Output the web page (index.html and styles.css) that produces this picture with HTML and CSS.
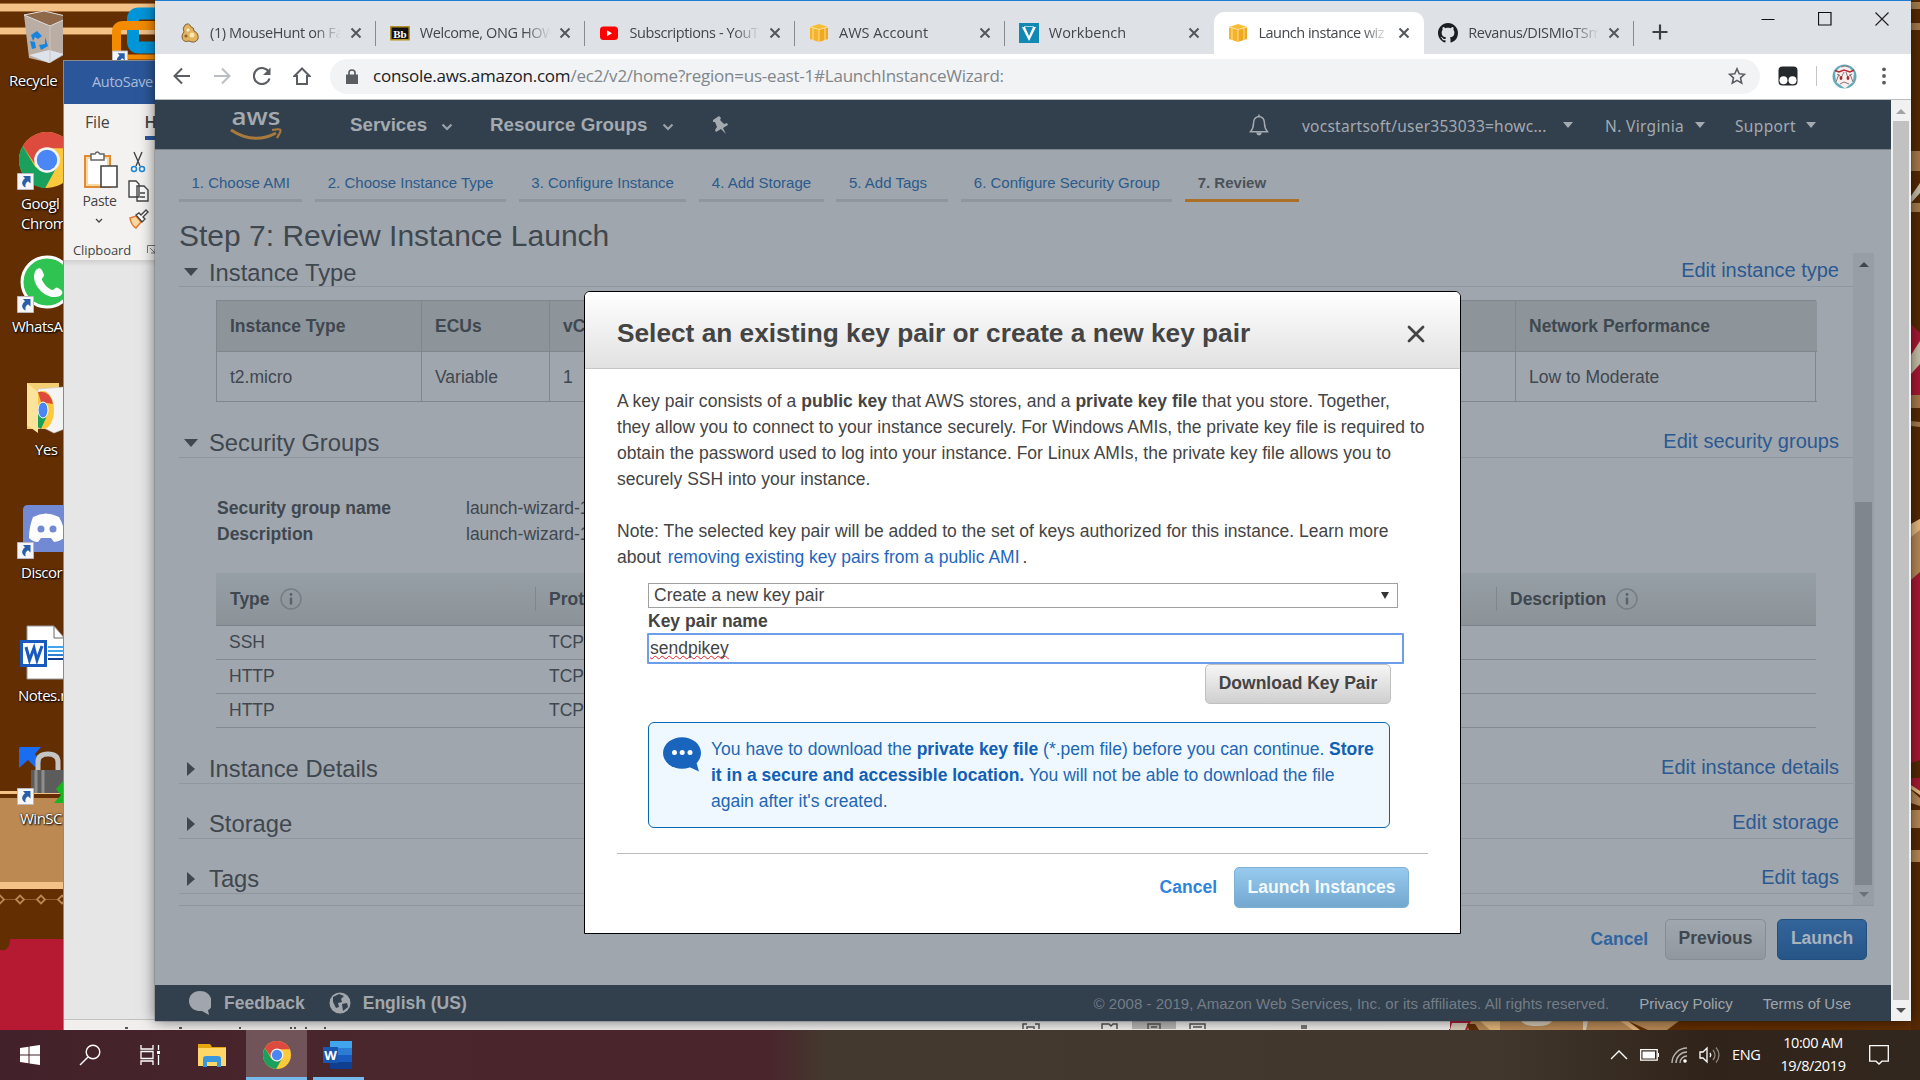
FILE: index.html
```html
<!DOCTYPE html>
<html lang="en">
<head>
<meta charset="utf-8">
<title>Launch instance wizard</title>
<link rel="stylesheet" href="styles.css">
</head>
<body>
<svg width="0" height="0" class="defs">
  <defs>
    <symbol id="chrome" viewBox="0 0 48 48">
      <circle cx="24" cy="24" r="24" fill="#fdc93c"/>
      <path d="M3.2 12A24 24 0 0 1 44.8 12L45.8 14H24L14 28z" fill="#dd4b3e"/>
      <path d="M3.2 12A24 24 0 0 0 22.5 48L33 29 24 35 14 30z" fill="#19a05c"/>
      <circle cx="24" cy="24" r="11" fill="#f4f4f4"/>
      <circle cx="24" cy="24" r="8.8" fill="#4a86f5"/>
    </symbol>
    <symbol id="shortcut" viewBox="0 0 17 17">
      <path d="M.5.5h16v16H.5z" fill="#f6f6f8" stroke="#b9b9bd"/>
      <path d="M6 3h7.500v7.500L11 8.200C8.600 9.800 8 11.500 8.600 14.500 4.500 12.500 3.800 8.800 8 5.300z" fill="#2a5ea8"/>
    </symbol>
    <symbol id="cube" viewBox="0 0 20 20">
      <path d="M1 4 10 6v13l-9-3z" fill="#f4b32b"/><path d="M19 4 10 6v13l9-3z" fill="#f0a91f"/>
      <path d="M1 4 10 1l9 3-9 2.500z" fill="#f7bd35"/>
      <path d="M1 4 10 6.500 19 4M10 6.500V19M4 5v12M16 5v12" stroke="#fde3a5" stroke-width=".9" fill="none"/>
    </symbol>
    <symbol id="close" viewBox="0 0 12 12"><path d="M1.500 1.500l9 9M10.500 1.500l-9 9" stroke="#54585c" stroke-width="2" fill="none"/></symbol>
    <symbol id="info" viewBox="0 0 22 22"><circle cx="11" cy="11" r="10" fill="none" stroke="#757d85" stroke-width="1.500"/><path d="M11 9.500v7" stroke="#596169" stroke-width="2.400"/><circle cx="11" cy="6.500" r="1.400" fill="#596169"/></symbol>
    <symbol id="chev" viewBox="0 0 12 8"><path d="M1.500 1.500 6 6l4.500-4.500" stroke="#9aa1a8" stroke-width="2.200" fill="none"/></symbol>
  </defs>
</svg>

<div class="desktop">
  <svg class="wallpaper" viewBox="0 0 1920 1080">
    <path fill="#632e02" d="M0 0h1920v1080H0z"/>
    <path fill="#f2c286" d="M0 4h160v7H0zM0 28h160v6H0zM0 882h80v7H0zM0 791h80v3H0z"/>
    <path fill="#a8703a" d="M0 3h160v1H0zM0 11h160v1H0zM0 27h160v1H0zM0 34h160v1H0z"/>
    <path fill="#bc8953" d="M0 798h80v84H0z"/>
    <path d="M0 899.500h64" stroke="#8f5a2c"/>
    <path d="M-4 899.500l4-4 4 4-4 4zM16 899.500l4-4 4 4-4 4zM37 899.500l4-4 4 4-4 4zM58 899.500l4-4 4 4-4 4z" fill="#632e02" stroke="#b98652" stroke-width="1.800"/>
    <path fill="#b61a33" d="M0 950Q10 952 10 939H80v91H0z"/>
    <path fill="#562a03" d="M1911 0h9v1030h-9z"/>
    <path fill="#a87c4c" d="M1911 2h9v7h-9zM1911 23h9v7h-9zM1911 151h9v20h-9zM1911 203h9v9h-9zM1911 395h9v13h-9zM1911 421l9 1v5l-9-1z"/>
    <path fill="#c8c0a8" d="M1911 196l9-13v10l-9 10z"/>
    <path fill="#a81834" d="M1911 324l9 9v62h-9zM1911 580l9-8v188l-9 3zM1911 778h9v18l-9-12z"/>
    <path fill="#c8c0a8" d="M1911 355l9-14v23l-9 10z"/>
    <path fill="#b98a56" d="M1911 524l9-5v53l-9 8zM1911 790l9 8v8l-9-3zM1911 810h9v18h-9zM1911 850h9v12h-9z"/>
    <path fill="#e6bb80" d="M1911 524l9-5v11l-9 7zM1911 785l9 6v4l-9-6z"/>
    <path fill="#b98a56" d="M1449 1021h230l-12 9h-218z"/>
    <path fill="#b01a38" d="M1449 1021h22l-4 9h-18z"/>
    <path fill="#d8cdbb" d="M1452 1023h16l-3 7h-15zM1521 1021h31q-2 5-15 5t-16-5zM1583 1021h5l-2 9h-3z"/>
    <path fill="#e2b77c" d="M1480 1021h20v9h-10zM1620 1021h8l14 9h-9z"/>
    <path fill="#632e02" d="M1467 1024l8 0 4 6h-10zM1628 1021l12 9h8z"/>
  </svg>

  <ul class="icons">
    <li><svg viewBox="0 0 64 60"><path d="M24 7 44 3 70 9 64 47 50 55 29 50z" fill="#b9ada4"/><path d="M24 7 44 3 70 9 50 18z" fill="#8e6a4b" stroke="#ddd" stroke-width="1"/><path d="M29 47l20-5 15 4-15 9z" fill="#dde3ea"/><path d="M50 18v37" stroke="#cbc5bf"/><path d="M31 27l6-4 5 5-4 3-3-2-2 4zM30 33l5 1 1 6-4 1zM39 37l6-1 0-7 3 9-7 4z" fill="#1685e0"/></svg><span class="lb recycle">Recycle</span></li>
    <li><svg viewBox="0 0 64 60"><use href="#chrome" x="19" y="1" width="56" height="56"/><use href="#shortcut" x="17" y="42" width="17" height="17"/></svg><span class="lb google">Googl<br>Chrom</span></li>
    <li><svg viewBox="0 0 64 60"><circle cx="47" cy="28" r="25" fill="#2fc351" stroke="#fff" stroke-width="3"/><path d="M36 16c4-4 6-1 8 5 0 3-3 3-2 5 3 6 6 8 10 10 3 0 3-4 6-2 6 3 5 6 2 8-14 6-32-14-24-26z" fill="#fff"/><use href="#shortcut" x="17" y="42" width="17" height="17"/></svg><span class="lb whats">WhatsA</span></li>
    <li><svg viewBox="0 0 64 60"><path d="M27 6h32v46H27z" fill="#f3cf71"/><path d="M38 12l26-2v42l-10 4-16-8z" fill="#f4f4f2" stroke="#c8c8c8" stroke-width=".6"/><ellipse cx="43" cy="33" rx="11" ry="19" fill="#fdc93c"/><path d="M38 15q12-2 15 12l-12-2z" fill="#dd4b3e"/><path d="M36 32l10 9-5 11-5-3z" fill="#19a05c"/><ellipse cx="43" cy="33" rx="5" ry="8" fill="#4a86f5" stroke="#fff"/><path d="M27 6l11 9v41l-11-8z" fill="#fbe39b"/></svg><span class="lb yes">Yes</span></li>
    <li><svg viewBox="0 0 64 60"><path d="M28 5h36v47H28q-5 0-5-5V10q0-5 5-5z" fill="#7289d4"/><path d="M33 17q13-7 26 0 6 10 5 21-5 4-10 4l-3-4H41l-3 4q-5 0-9-4 0-11 4-21z" fill="#fff"/><circle cx="41" cy="29" r="3.500" fill="#7289d4"/><circle cx="53" cy="29" r="3.500" fill="#7289d4"/><use href="#shortcut" x="17" y="42" width="17" height="17"/></svg><span class="lb discord">Discor</span></li>
    <li><svg viewBox="0 0 64 60"><path d="M27 3h27l12 14v39H27z" fill="#fff" stroke="#999"/><path d="M54 3v12h11" fill="none" stroke="#666"/><path d="M48 24h16M48 28h16" stroke="#41a5ee" stroke-width="2"/><path d="M48 32h16" stroke="#2b7cd3" stroke-width="2"/><path d="M48 36h16" stroke="#103f91" stroke-width="2"/><path d="M21.500 18.500h24v24h-24z" fill="#fff" stroke="#185abd" stroke-width="3"/><path d="M26 24l3.500 13 4.500-12 3 12 5-14" fill="none" stroke="#185abd" stroke-width="3"/></svg><span class="lb notes">Notes.r</span></li>
    <li><svg viewBox="0 0 64 60"><path d="M20 1h21l-6 7 6 8-6 5-7-7-9 8V4q0-3 1-3z" fill="#1a6cf0"/><path d="M38 26V16q0-8 10-8t10 8v10" fill="none" stroke="#c5c5c5" stroke-width="5"/><path d="M31 24h34v23H33q-2-2-2-4z" fill="#5c5c5c"/><path d="M36 24v23M43 24v23" stroke="#8d8d8d" stroke-width="3"/><path d="M64 34l-8 9 5 6-7 8h10z" fill="#16b521"/><use href="#shortcut" x="17" y="42" width="17" height="17"/></svg><span class="lb winscp">WinSC</span></li>
  </ul>
  <svg class="vm" viewBox="0 0 60 60"><path d="M60 13.500H41q-6 0-6 6v22q0 6 6 6h19" fill="none" stroke="#0095d9" stroke-width="12"/><path d="M60 25.500H25q-6.500 0-6.500 6.500v34" fill="none" stroke="#f38b00" stroke-width="9"/><path d="M22 57h38" stroke="#f38b00" stroke-width="5"/><use href="#shortcut" x="14" y="50" width="16" height="17"/></svg>

  <section class="word">
    <header class="word-title">AutoSave</header>
    <div class="word-tabs"><span>File</span><span class="home">H</span></div>
    <div class="ribbon">
      <div class="paste">
        <svg width="36" height="40" viewBox="0 0 36 40"><path d="M2 6h25v31H2z" fill="#fbd9a0" stroke="#e08a33" stroke-width="2"/><path d="M5 9h19v25H5z" fill="#fff"/><path d="M8 4h4q2-4 5 0h4v6H8z" fill="#fff" stroke="#666" stroke-width="1.500"/><path d="M18 16h16v21H18z" fill="#fff" stroke="#444" stroke-width="1.600"/></svg>
        <span>Paste</span>
        <svg width="8" height="6" viewBox="0 0 8 6"><path d="M1 1l3 3 3-3" stroke="#444" stroke-width="1.300" fill="none"/></svg>
      </div>
      <div class="clips">
        <svg width="16" height="22" viewBox="0 0 16 22"><path d="M4 1l6 14M12 1L6 15" stroke="#444" stroke-width="1.400"/><circle cx="4" cy="18" r="2.500" fill="none" stroke="#1e88d2" stroke-width="1.500"/><circle cx="12" cy="18" r="2.500" fill="none" stroke="#1e88d2" stroke-width="1.500"/></svg>
        <svg width="21" height="22" viewBox="0 0 21 22"><path d="M1 1h7l3 3v13H1zM9 6h7l4 4v11H9zM12 13h5M12 17h5" stroke="#444" stroke-width="1.400" fill="#f9f9f9"/></svg>
        <svg width="21" height="20" viewBox="0 0 21 20"><path d="M2 9l6-2 5 6-5 6q-5-3-6-10z" fill="#fbd9a0" stroke="#e8762c" stroke-width="1.500"/><path d="M8 6l3-2 2 2 5-5 2 2-5 5 2 2-3 3z" fill="#fff" stroke="#444" stroke-width="1.400"/></svg>
      </div>
    </div>
    <div class="group-name">Clipboard<svg width="9" height="9" viewBox="0 0 9 9"><path d="M.5 8V.5H8M3 3l5 5M8 4v4H4" stroke="#777" fill="none"/></svg></div>
    <div class="word-doc"></div>
    <svg class="word-status" viewBox="0 0 1386 9" width="1386" height="9"><path d="M0 0h1386v9H0z" fill="#f0efee"/><path d="M61 8h3M115 8h3M175 8h2M226 8h2M230 8h2M241 8h2M260 8h2" stroke="#555" stroke-width="2"/><path d="M1068 0h44v9h-44z" fill="#bab9b8"/><path d="M959 9V4h4M971 4h4v5M963 9V7h7v2M1038 9V4h7l2 2 2-2h4v5M1084 9V4h12v5M1087 7h6M1126 9V4h15v5M1129 7h9" fill="none" stroke="#555" stroke-width="1.500"/><path d="M1237 5h6v4h-6z" fill="#777"/></svg>
  </section>

  <section class="browser">
    <header class="tabs">
      <div class="tab"><svg viewBox="0 0 20 20"><path d="M5 2q4-3 6 2 3 0 3 4 5 2 4 8-3 5-9 2-6 2-7-4 0-3 2-5-2-4 1-7z" fill="#e3b45f" stroke="#806035"/><circle cx="8" cy="7" r="1.600" fill="#fff3cf"/><circle cx="12" cy="12" r="2.500" fill="#fbe7ae"/><circle cx="6" cy="13" r="1.600" fill="#8b6430"/></svg><span class="t">(1) MouseHunt on Fa</span><svg class="x"><use href="#close"/></svg></div>
      <div class="tab"><svg viewBox="0 0 20 20"><path d="M.8 3.800h18.400v13H.8z" fill="#111" stroke="#b59225" stroke-width="1.500"/><text x="10" y="14.500" text-anchor="middle" class="bb">Bb</text></svg><span class="t t2">Welcome, ONG HOW</span><svg class="x"><use href="#close"/></svg></div>
      <div class="tab"><svg viewBox="0 0 20 20"><rect x="1" y="3.500" width="18" height="13.500" rx="3.500" fill="#f00"/><path d="M8 7.300l5 3-5 3z" fill="#fff"/></svg><span class="t t3">Subscriptions - YouTu</span><svg class="x"><use href="#close"/></svg></div>
      <div class="tab"><svg viewBox="0 0 20 20"><use href="#cube"/></svg><span class="t t4">AWS Account</span><svg class="x"><use href="#close"/></svg></div>
      <div class="tab last"><svg viewBox="0 0 20 20"><path d="M0 0h20v20H0z" fill="#1288b5"/><path d="M3 4l7 14 7-14h-3l-4 9-4-9z" fill="#fff"/><path d="M5 3.500h10" stroke="#9fd2e6" stroke-width="1"/></svg><span class="t t4">Workbench</span><svg class="x"><use href="#close"/></svg></div>
      <div class="tab active"><svg viewBox="0 0 20 20"><use href="#cube"/></svg><span class="t t6">Launch instance wiz</span><svg class="x"><use href="#close"/></svg></div>
      <div class="tab"><svg viewBox="0 0 16 16"><path fill="#1b1f23" d="M8 0C3.580 0 0 3.580 0 8c0 3.540 2.290 6.530 5.470 7.590.4.070.55-.17.55-.38 0-.19-.01-.82-.01-1.490-2.010.37-2.530-.49-2.690-.94-.09-.23-.48-.94-.82-1.130-.28-.15-.68-.52-.01-.53.63-.01 1.080.58 1.230.82.72 1.210 1.870.87 2.330.66.07-.52.28-.87.51-1.070-1.780-.2-3.640-.89-3.640-3.950 0-.87.31-1.590.82-2.150-.08-.2-.36-1.020.08-2.120 0 0 .67-.21 2.200.82.64-.18 1.320-.27 2-.27s1.360.09 2 .27c1.530-1.040 2.200-.82 2.200-.82.44 1.100.16 1.920.08 2.120.51.56.82 1.270.82 2.150 0 3.070-1.870 3.750-3.650 3.950.29.25.54.73.54 1.480 0 1.070-.01 1.930-.01 2.200 0 .21.15.46.55.38A8.010 8.010 0 0 0 16 8c0-4.420-3.580-8-8-8z"/></svg><span class="t t7">Revanus/DISMIoTSm</span><svg class="x"><use href="#close"/></svg></div>
      <svg class="plus" width="16" height="16" viewBox="0 0 16 16"><path d="M8 .5v15M.5 8h15" stroke="#3c4043" stroke-width="2.200"/></svg>
      <div class="win">
        <svg width="14" height="14" viewBox="0 0 14 14"><path d="M.5 7.500h13" stroke="#111"/></svg>
        <svg width="14" height="14" viewBox="0 0 14 14"><path d="M.5.5h12.500v12.500H.5z" stroke="#111" stroke-width="1.200" fill="none"/></svg>
        <svg width="14" height="14" viewBox="0 0 14 14"><path d="M.5.5l13 13M13.500.5l-13 13" stroke="#222" stroke-width="1.200"/></svg>
      </div>
    </header>
    <div class="toolbar">
      <svg width="18" height="18" viewBox="0 0 18 18"><path d="M17 9H2M9 1.500L1.500 9 9 16.500" stroke="#5a5e63" stroke-width="2" fill="none"/></svg>
      <svg width="18" height="18" viewBox="0 0 18 18"><path d="M1 9h15M9 1.500L16.500 9 9 16.500" stroke="#bbbec2" stroke-width="2" fill="none"/></svg>
      <svg width="18" height="18" viewBox="0 0 18 18"><path d="M15.500 4.500A8 8 0 1 0 16.500 11.500" stroke="#5a5e63" stroke-width="2.100" fill="none"/><path d="M17.500.5v7.500H10z" fill="#5a5e63"/></svg>
      <svg width="18" height="18" viewBox="0 0 18 18"><path d="M9 1.500L1.500 9H4v8h10V9h2.500z" stroke="#5a5e63" stroke-width="2" fill="none"/></svg>
      <div class="omni">
        <svg width="12" height="15" viewBox="0 0 12 15"><path d="M0 5.500h12V15H0z" fill="#5a5e63"/><path d="M3 6V3.800q0-2.800 3-2.800t3 2.800V6" stroke="#5a5e63" stroke-width="1.700" fill="none"/></svg>
        <span class="url"><b>console.aws.amazon.com</b>/ec2/v2/home?region=us-east-1#LaunchInstanceWizard:</span>
        <svg class="star" width="18" height="18" viewBox="0 0 18 18"><path d="M9 1.800l2.200 5 5.300.5-4 3.600 1.200 5.300L9 13.400l-4.700 2.800 1.200-5.300-4-3.600 5.300-.5z" stroke="#5a5e63" stroke-width="1.600" fill="none"/></svg>
      </div>
      <svg class="ext" width="20" height="20" viewBox="0 0 20 20"><rect x=".5" y=".5" width="19" height="19" rx="4" fill="#24292e"/><circle cx="5.500" cy="14.300" r="4" fill="#fff"/><circle cx="14.500" cy="14.300" r="4" fill="#fff"/></svg>
      <i class="bar"></i>
      <svg class="avatar" width="25" height="25" viewBox="0 0 25 25"><circle cx="12.500" cy="12.500" r="12" fill="#62a9bb"/><path d="M3 9Q12-5 22 9l-1 9-8 6.500L4 18z" fill="#f6efee"/><path d="M3 6.500l4 1.500 5-2 6 2 4-2" stroke="#b62d35" stroke-width="1.600" fill="none"/><path d="M5 10l3 2M20 10l-3 2M4 18l3-8M21 18l-3-8M12 8l-3 6M14 8l2 6M8 20l4-2 5 2M9 3l4-1 4 1" stroke="#8f7276" fill="none"/><ellipse cx="9" cy="14" rx="1.400" ry="1.900" fill="#a02a30"/><ellipse cx="16" cy="14" rx="1.400" ry="1.900" fill="#a02a30"/></svg>
      <svg class="dots" width="4" height="18" viewBox="0 0 4 18"><g fill="#5a5e63"><circle cx="2" cy="2.300" r="1.900"/><circle cx="2" cy="9" r="1.900"/><circle cx="2" cy="15.700" r="1.900"/></g></svg>
    </div>

    <div class="viewport">
      <div class="page">
        <nav class="aws">
          <svg class="logo" width="52" height="32" viewBox="0 0 52 32"><text x="26" y="16" text-anchor="middle" class="aws-word" textLength="49" lengthAdjust="spacingAndGlyphs">aws</text><path d="M1 21Q24 36 46 24" stroke="#a87a3c" stroke-width="3" fill="none"/><path d="M42 21q8-1.500 8.500 0T47 29" stroke="#a87a3c" stroke-width="2.200" fill="none"/></svg>
          <span class="menu services">Services</span><svg class="cv" width="12" height="8"><use href="#chev"/></svg>
          <span class="menu groups">Resource Groups</span><svg class="cv" width="12" height="8"><use href="#chev"/></svg>
          <svg class="pin" width="16" height="18" viewBox="0 0 16 18"><path d="M1 4L7 0l2 2-1 2 4 4 3-1 1 2-5 3 3 6-5-5-5 3-1-2 2-3-2-5-2 0z" fill="#a3aab0"/></svg>
          <svg class="bell" width="20" height="22" viewBox="0 0 20 22"><path d="M10 2.500C5 3 4.500 6.500 4.500 9.500 4.500 14 3 16 1.500 17.800h17C17 16 15.500 14 15.500 9.500 15.500 6.500 15 3 10 2.500zM10 .5v2" stroke="#a3aab0" stroke-width="1.500" fill="none"/><path d="M7 18.500h6q-1 3-3 3t-3-3z" fill="#a3aab0"/></svg>
          <span class="acct user">vocstartsoft/user353033=howc...</span><i class="caret"></i>
          <span class="acct region">N. Virginia</span><i class="caret"></i>
          <span class="acct support">Support</span><i class="caret"></i>
        </nav>

        <main class="wizard">
          <ol class="steps">
            <li>1. Choose AMI</li><li>2. Choose Instance Type</li><li>3. Configure Instance</li><li>4. Add Storage</li><li class="tagstep">5. Add Tags</li><li>6. Configure Security Group</li><li class="current">7. Review</li>
          </ol>
          <h1>Step 7: Review Instance Launch</h1>
          <div class="scroller">
            <div class="content">
              <div class="sec first"><i class="open"></i><h2>Instance Type</h2><a>Edit instance type</a></div>
              <div class="grid">
                <b>Instance Type</b><b>ECUs</b><b>vCPUs</b><b>Network Performance</b>
                <span>t2.micro</span><span>Variable</span><span>1</span><span>Low to Moderate</span>
              </div>
              <div class="sec second"><i class="open"></i><h2>Security Groups</h2><a>Edit security groups</a></div>
              <dl class="kv"><dt>Security group name</dt><dd>launch-wizard-1</dd><dt>Description</dt><dd>launch-wizard-1</dd></dl>
              <div class="rules">
                <div class="rh"><b>Type<svg width="22" height="22"><use href="#info"/></svg></b><b>Protocol</b><b>Description<svg width="22" height="22"><use href="#info"/></svg></b></div>
                <div class="rr"><span>SSH</span><span>TCP</span></div>
                <div class="rr"><span>HTTP</span><span>TCP</span></div>
                <div class="rr"><span>HTTP</span><span>TCP</span></div>
              </div>
              <div class="sec third details"><i class="shut"></i><h2>Instance Details</h2><a>Edit instance details</a></div>
              <div class="sec third"><i class="shut"></i><h2>Storage</h2><a>Edit storage</a></div>
              <div class="sec third"><i class="shut"></i><h2>Tags</h2><a>Edit tags</a></div>
            </div>
            <div class="sb-in"><i class="up"></i><i class="thumb"></i><i class="down"></i></div>
          </div>
          <div class="actions"><a>Cancel</a><span class="btn prev">Previous</span><span class="btn launch">Launch</span></div>
        </main>

        <footer class="foot">
          <svg width="22" height="24" viewBox="0 0 22 24"><path d="M11 0c14 0 14 18 8 19l1 5-7-4C-4 21-4 0 11 0z" fill="#a0a6ac"/></svg><b class="fb">Feedback</b>
          <svg width="22" height="24" viewBox="0 0 22 24"><circle cx="11" cy="12" r="10.500" fill="#a0a6ac"/><path d="M4 6l6-3 5 2-3 3 1 3-4 1 1 4-3 1-3-6zM13 13l5-1 1 4-5 4z" fill="#323f4d"/></svg><b class="en">English (US)</b>
          <span class="copy">© 2008 - 2019, Amazon Web Services, Inc. or its affiliates. All rights reserved.</span><span>Privacy Policy</span><span class="terms">Terms of Use</span>
        </footer>

        <div class="modal">
          <header><h3>Select an existing key pair or create a new key pair</h3><svg width="18" height="18" viewBox="0 0 18 18"><path d="M2 2l14 14M16 2L2 16" stroke="#444" stroke-width="2.800" stroke-linecap="round"/></svg></header>
          <div class="mbody">
            <p>A key pair consists of a <b>public key</b> that AWS stores, and a <b>private key file</b> that you store. Together,<br>they allow you to connect to your instance securely. For Windows AMIs, the private key file is required to<br>obtain the password used to log into your instance. For Linux AMIs, the private key file allows you to<br>securely SSH into your instance.</p>
            <p class="note">Note: The selected key pair will be added to the set of keys authorized for this instance. Learn more<br>about <a>removing existing key pairs from a public AMI</a>.</p>
            <div class="form">
              <div class="select"><span>Create a new key pair</span><i></i></div>
              <label>Key pair name</label>
              <div class="input"><span>sendpikey</span></div>
              <div class="dl"><span class="btn">Download Key Pair</span></div>
              <div class="notice">
                <svg width="39" height="36" viewBox="0 0 39 36"><ellipse cx="19" cy="16" rx="19" ry="15.800" fill="#1965bd"/><path d="M24 29l12 5.500L33 24z" fill="#1965bd"/><g fill="#fff"><circle cx="11.500" cy="15.500" r="2.500"/><circle cx="19.200" cy="15.500" r="2.500"/><circle cx="27" cy="15.500" r="2.500"/></g></svg>
                <p>You have to download the <b>private key file</b> (*.pem file) before you can continue. <b>Store<br>it in a secure and accessible location.</b> You will not be able to download the file<br>again after it's created.</p>
              </div>
            </div>
            <div class="mfoot"><a>Cancel</a><span class="btn li">Launch Instances</span></div>
          </div>
        </div>
      </div>
      <div class="sb-out"><i class="up"></i><i class="thumb"></i><i class="down"></i></div>
    </div>
  </section>

  <footer class="taskbar">
    <div class="tb"><svg width="20" height="20" viewBox="0 0 20 20"><path d="M0 3l8.500-1.200v7.700H0zM9.500 1.600L20 0v9.500H9.500zM0 10.500h8.500v7.700L0 17zM9.500 10.500H20V20L9.500 18.400z" fill="#fff"/></svg></div>
    <div class="tb"><svg width="22" height="22" viewBox="0 0 22 22"><circle cx="14" cy="8" r="6.800" fill="none" stroke="#fff" stroke-width="1.400"/><path d="M9 13L1 21" stroke="#fff" stroke-width="1.400"/></svg></div>
    <div class="tb"><svg width="22" height="22" viewBox="0 0 22 22"><path d="M2 1v4h12V1M2 21v-4h12v4M2 7.500h12v7H2zM19.500 1v5M19.500 11v10" fill="none" stroke="#fff" stroke-width="1.300"/><path d="M18 7h3v3h-3z" fill="#fff"/></svg></div>
    <div class="tb folder"><svg width="28" height="26" viewBox="0 0 28 26"><path d="M0 2h12l2 3h14v19H0z" fill="#e8a60c"/><path d="M0 6h28v18H0z" fill="#fed768"/><path d="M5 25V17q0-3 3-3h12q3 0 3 3v8h-4v-5H9v5z" fill="#3a96dd"/></svg></div>
    <div class="tb on"><svg width="28" height="28"><use href="#chrome"/></svg></div>
    <div class="tb run"><svg width="30" height="28" viewBox="0 0 30 28"><path d="M7 0h22v7H7z" fill="#41a5ee"/><path d="M7 7h22v7H7z" fill="#2b7cd3"/><path d="M7 14h22v7H7z" fill="#185abd"/><path d="M7 21h22v7H7z" fill="#103f91"/><path d="M0 6h15v16H0z" fill="#1a56ae"/><text x="7.500" y="18.500" text-anchor="middle" class="w">W</text></svg></div>
    <div class="tray">
      <svg width="18" height="10" viewBox="0 0 18 10"><path d="M1 9l8-8 8 8" stroke="#fff" stroke-width="1.400" fill="none"/></svg>
      <svg width="19" height="12" viewBox="0 0 19 12"><path d="M.7.7h16.500v10.500H.7z" stroke="#fff" stroke-width="1.300" fill="none"/><path d="M2.500 2.500h12.500v7H2.500zM18 4h1v4h-1z" fill="#fff"/></svg>
      <svg width="16" height="16" viewBox="0 0 16 16"><path d="M1 16A15 15 0 0 1 16 1M5 16A11 11 0 0 1 16 5M9 16a7 7 0 0 1 7-7" stroke="#bbb5b0" stroke-width="1.400" fill="none"/><circle cx="14" cy="14" r="1.800" fill="#fff"/></svg>
      <svg width="21" height="18" viewBox="0 0 21 18"><path d="M1 6h3l4-4v14l-4-4H1z" stroke="#fff" stroke-width="1.300" fill="none"/><path d="M11 7q1.500 2 0 4" stroke="#fff" stroke-width="1.300" fill="none"/><path d="M14 4q4 5 0 10M17 1.500q6 7.500 0 15" stroke="#8d867e" stroke-width="1.300" fill="none"/></svg>
      <span class="eng">ENG</span>
      <div class="clock"><span>10:00 AM</span><span>19/8/2019</span></div>
      <svg class="ac" width="20" height="20" viewBox="0 0 20 20"><path d="M.7.7h18.600v15.500H13L10 19l-3-2.800H.7z" stroke="#fff" stroke-width="1.300" fill="none"/></svg>
    </div>
  </footer>
</div>
</body>
</html>
```
FILE: styles.css
```css
* { box-sizing: border-box; }
body { margin: 0; background: #632e02; font-family: "Liberation Sans", Arial, sans-serif; }
h1, h2, h3, p, ul, ol, dl, dd { margin: 0; padding: 0; font-weight: 400; list-style: none; }
svg { display: block; flex: none; }
i { display: block; flex: none; }
.defs { position: absolute; }

.desktop { position: relative; width: 1920px; height: 1080px; overflow: hidden; }
.wallpaper { position: absolute; inset: 0; width: 1920px; height: 1080px; }

/* desktop icons */
.icons { position: absolute; left: 0; top: 8px; width: 63px; overflow: hidden; }
.icons li { height: 123px; }
.icons svg { width: 64px; height: 60px; overflow: hidden; }
.lb { display: block; margin-top: 2px; font: 15px/20px "Open Sans", sans-serif; letter-spacing: -.5px; color: #fff; white-space: nowrap; text-shadow: 1px 1px 2px #000, 0 0 2px #000; }
.recycle { margin-left: 9px; }
.google { margin-left: 21px; }
.whats { margin-left: 12px; }
.yes { margin-left: 35px; }
.discord { margin-left: 21px; }
.notes { margin-left: 18px; }
.winscp { margin-left: 20px; }
.vm { position: absolute; left: 98px; top: 0; width: 60px; height: 60px; }

/* word processor window */
.word { position: absolute; left: 63px; top: 60px; width: 1386px; height: 970px; border-left: 1px solid #8a8a8a; border-top: 1px solid #8a8a8a; background: #f3f2f1; font-family: "Open Sans", sans-serif; color: #444; }
.word-title { height: 43px; padding-left: 28px; background: #2b579a; color: #aabbd8; font-size: 14.500px; line-height: 42px; letter-spacing: -.3px; }
.word-tabs { display: flex; gap: 35px; height: 36px; padding-left: 21px; font-size: 16px; line-height: 36px; letter-spacing: -.2px; }
.home { width: 30px; height: 36px; border-bottom: 4px solid #2b579a; font-weight: 600; }
.ribbon { display: flex; gap: 9px; height: 99px; padding: 10px 0 0 19px; }
.paste { display: flex; flex-direction: column; align-items: center; width: 36px; font-size: 14px; line-height: 22px; letter-spacing: -.3px; }
.paste span { margin-left: -3px; }
.paste svg:last-child { margin: 6px 0 0 -4px; }
.clips { display: flex; flex-direction: column; gap: 7px; padding-top: 1px; }
.clips svg:first-child { margin-left: 2px; }
.group-name { display: flex; align-items: center; gap: 16px; height: 21px; padding: 0 0 0 9px; font-size: 13px; letter-spacing: -.1px; }
.word-doc { height: 760px; background: linear-gradient(#d0d0d0, #e6e6e6 6px); border-bottom: 1px solid #c0c0c0; }

/* browser window */
.browser { position: absolute; left: 155px; top: 0; width: 1756px; height: 1021px; border-top: 1px solid #1c7fd4; background: #fff; box-shadow: 0 0 14px rgba(0,0,0,.55), 0 0 1px #333; }
.tabs { display: flex; height: 53px; padding-left: 11px; background: #dee1e6; }
.tab { display: flex; align-items: center; width: 209.700px; height: 42px; margin-top: 11px; padding: 0 14px; position: relative; flex: none; }
.tab > svg:first-child { width: 20px; height: 20px; }
.tab .t { width: 133px; margin: 0 8px 0 10px; overflow: hidden; white-space: nowrap; font: 14.500px/22px "Open Sans", sans-serif; letter-spacing: -.4px; color: #43464a; -webkit-mask-image: linear-gradient(90deg, #000 104px, transparent 131px); mask-image: linear-gradient(90deg, #000 104px, transparent 131px); }
.tab .t4 { letter-spacing: 0; }
.tab .t6 { letter-spacing: -.5px; }
.tab .x { width: 12px; height: 12px; }
.tab::after { content: ""; position: absolute; right: 0; top: 9px; width: 1px; height: 25px; background: #868b90; }
.tab.last::after, .tab.active::after { display: none; }
.tab.active { background: #fff; border-radius: 10px 10px 0 0; }
.bb { font: bold 11px "Liberation Serif", serif; fill: #fff; }
.plus { margin: 23px 0 0 18px; }
.win { display: flex; gap: 43px; margin: 11px 0 0 auto; padding-right: 22px; }

.toolbar { display: flex; align-items: center; height: 46px; padding: 0 25px 1px 18px; border-bottom: 1px solid #b9bdc1; gap: 22px; }
.omni { display: flex; align-items: center; width: 1430px; height: 35px; margin-left: -3px; padding: 0 14px 0 16px; border-radius: 18px; background: #f1f3f4; }
.url { margin-left: 15px; font: 17px/30px "Open Sans", sans-serif; letter-spacing: -.23px; color: #80868b; white-space: nowrap; }
.url b { font-weight: 400; color: #202124; }
.star { margin-left: auto; }
.ext { margin-left: -4px; }
.bar { width: 1px; height: 20px; margin: 0 -7px 0 -4px; background: #c4c7ca; }
.dots { margin-left: 3px; }

.viewport { display: flex; height: 921px; }
.page { position: relative; width: 1736px; display: flex; flex-direction: column; background: #9fa6ad; }
.aws { display: flex; align-items: center; height: 50px; background: #323f4d; color: #a3aab0; border-bottom: 1px solid #7c858e; }
.logo { margin-left: 75px; }
.aws-word { font: 600 24px "Open Sans", sans-serif; fill: #a3aab0; }
.menu { font-weight: 700; font-size: 18.750px; }
.services { width: 77px; margin-left: 68px; }
.cv { margin: 4px 0 0 14px; }
.groups { width: 158px; margin-left: 37px; }
.pin { margin-left: 38px; }
.bell { margin-left: auto; }
.acct { margin-top: 2px; font: 15.500px "Noto Sans", sans-serif; letter-spacing: .35px; white-space: nowrap; }
.user { width: 250px; margin-left: 33px; letter-spacing: .25px; }
.region { width: 79px; margin-left: 32px; }
.support { width: 60px; margin-left: 30px; }
.caret { margin: 1px 0 0 11px; border: 5px solid transparent; border-top: 6px solid #a3aab0; border-bottom: 0; }
.aws .caret:last-child { margin-right: 75px; }

.wizard { display: flex; flex-direction: column; height: 835px; padding: 13px 17px 0 24px; color: #3f474f; }
.steps { display: flex; gap: 12.900px; height: 39px; font-size: 15px; line-height: 40px; color: #2b5a8c; }
.steps li { height: 39px; padding: 0 12.500px; border-bottom: 3px solid #8f979e; white-space: nowrap; }
.steps .tagstep { width: 112px; }
.steps .current { width: 114px; font-weight: 700; color: #4b5259; border-color: #aa7028; }
h1 { height: 51px; font-size: 30px; line-height: 67px; }
.scroller { display: flex; height: 653px; width: 1695px; border-bottom: 1px solid #8f979e; }
.content { width: 1674px; }
.sec { display: flex; align-items: center; height: 34px; padding: 4px 14px 0 8px; border-bottom: 1px solid #90989f; }
.sec h2 { margin-left: 11px; font-size: 23.750px; line-height: 28px; }
.sec a { margin: -2px 0 0 auto; font-size: 20px; color: #2b5991; }
.first h2 { padding-top: 2px; }
.open { width: 14px; margin-left: -3px; border: 7px solid transparent; border-top: 8px solid #3f474f; border-bottom: 0; }
.shut { width: 11px; height: 14px; border: 7px solid transparent; border-left: 8px solid #3f474f; border-right: 0; }
.second { margin-top: 22px; }
.third { margin-top: 21px; }
.details { margin-top: 22px; }
.grid { display: grid; grid-template-columns: 205px 128px 966px 301px; grid-template-rows: 51px 50px; width: 1600px; margin: 13px 0 0 37px; border: 1px solid #7f878e; border-width: 1px 1px 0 1px; font-size: 17.500px; }
.grid > * { padding: 0 13px; line-height: 50px; border-right: 1px solid #7f878e; border-bottom: 1px solid #7f878e; }
.grid > :nth-child(4n) { border-right: 0; }
.grid b { background: #8d959b; }
.kv { display: grid; grid-template-columns: 249px 300px; margin: 37px 0 0 38px; font-size: 17.500px; line-height: 26px; }
.kv dt { font-weight: 700; }
.rules { width: 1600px; margin: 26px 0 0 37px; font-size: 17.500px; }
.rh { display: grid; grid-template-columns: 319px 961px 320px; height: 53px; align-items: center; background: linear-gradient(#979fa6, #8b9399); border-bottom: 1px solid #7a8289; }
.rh b { display: flex; align-items: center; gap: 10px; height: 24px; padding-left: 13px; border-left: 1px solid #7f878e; }
.rh b:first-child { border-left-color: transparent; }
.rr { display: grid; grid-template-columns: 320px 1fr; height: 34px; padding-left: 13px; line-height: 32px; border-bottom: 1px solid #838b92; }
.sb-in { width: 21px; background: #979ea5; display: flex; flex-direction: column; align-items: center; }
.up { border: 5px solid transparent; border-bottom: 5px solid #3f474f; border-top: 0; margin-top: 9px; }
.down { border: 5px solid transparent; border-top: 5px solid #6b737a; border-bottom: 0; }
.sb-in .thumb { width: 17px; height: 383px; margin: 235px 0 7px; background: #7f868d; }
.actions { display: flex; align-items: center; justify-content: flex-end; height: 41px; margin-top: 13px; padding-right: 7px; font-size: 17.500px; font-weight: 700; }
.actions a { margin-right: 17px; color: #2f649e; }
.btn { display: flex; align-items: center; justify-content: center; height: 41px; padding-bottom: 2px; border: 1px solid #c0c0c0; border-radius: 5px; font-size: 17.500px; font-weight: 700; color: #444; background: linear-gradient(#f6f6f6, #cfcfcf); white-space: nowrap; }
.prev { width: 101px; margin-right: 11px; color: #3f474f; background: linear-gradient(#a0a7ae, #90979e); border-color: #858d94; }
.launch { width: 90px; color: #a9b3bd; background: linear-gradient(#33659b, #275587); border-color: #234f7f; }

.foot { display: flex; align-items: center; height: 36px; padding-left: 34px; background: #323f4d; color: #a0a6ac; font-size: 15px; white-space: nowrap; }
.foot b { font-size: 17.500px; }
.fb { margin: 0 24px 0 13px; }
.en { margin-left: 12px; }
.copy { margin: 0 30px 0 auto; color: #747d86; letter-spacing: .02px; }
.foot span { padding-top: 1px; }
.terms { margin: 0 40px 0 30px; }

.sb-out { display: flex; flex-direction: column; align-items: center; width: 20px; background: #f1f1f1; }
.sb-out .up { border-bottom-color: #a3a3a3; }
.sb-out .thumb { width: 16px; height: 879px; margin: 7px 0 8px; background: #c1c1c1; }
.sb-out .down { border-top-color: #505050; }

/* key pair dialog */
.modal { position: absolute; left: 429px; top: 191px; width: 877px; height: 643px; border: 1px solid #000; border-radius: 6px 6px 0 0; background: #fff; color: #444; font-size: 17.500px; line-height: 26px; overflow: hidden; }
.modal header { display: flex; justify-content: space-between; height: 77px; padding: 33px 35px 0 32px; background: linear-gradient(#fff, #e1e1e1); border-bottom: 1px solid #c6c6c6; }
h3 { margin-top: -7px; font-size: 26.250px; line-height: 30px; font-weight: 700; }
.mbody { padding: 19px 32px 0; }
.mbody p { white-space: nowrap; }
.mbody > p { letter-spacing: .015px; }
.mbody a { color: #1f66bd; }
.note { margin-top: 26px; }
.note a { margin: 0 3px 0 2px; }
.form { margin-left: 31px; padding-top: 13px; }
.select { display: flex; align-items: center; justify-content: space-between; width: 750px; height: 25px; padding: 0 8px 1px 5px; border: 1px solid #a0a0a0; }
.select i { border: 4px solid transparent; border-top: 7px solid #333; border-bottom: 0; }
.form label { display: block; font-weight: 700; height: 25px; line-height: 27px; }
.input { width: 757px; height: 31px; margin-left: -1px; padding-left: 1px; line-height: 27px; border: 2px solid #6d9eea; border-radius: 1px; }
.input span { text-decoration: underline wavy #e8202a 1.300px; text-underline-offset: 1px; text-decoration-skip-ink: none; }
.dl { display: flex; padding-left: 557px; }
.dl .btn { width: 186px; height: 40px; }
.notice { display: flex; width: 742px; height: 106px; margin-top: 18px; padding: 13px 0 0 14px; border: 1px solid #0769b5; border-radius: 6px; background: #f0f8ff; color: #2267b5; }
.notice b { color: #1160b5; }
.notice svg { margin: 1px 9px 0 0; }
.mfoot { display: flex; align-items: center; justify-content: flex-end; margin-top: 25px; padding: 13px 19px 0 0; border-top: 1px solid #bbb; font-weight: 700; }
.mfoot a { margin: -2px 17px 0 0; color: #2f83dd; }
.li { width: 175px; color: #f4f9fd; background: linear-gradient(#97caee, #73a8cf); border-color: #7fb0d4; }

/* taskbar */
.taskbar { position: absolute; left: 0; top: 1030px; width: 1920px; height: 50px; display: flex; background: linear-gradient(90deg, #43212a, #4a272c 20%, #4a252c 40%, #43392f 43%, #41372d 78%, #30231a 89%, #32271e); }
.tb { display: flex; align-items: center; justify-content: center; width: 60px; height: 50px; }
.tb.folder { width: 64px; }
.tb.on { width: 61px; margin-left: 2px; background: #70545a; border-bottom: 3px solid #76b9ed; padding-top: 3px; }
.tb.run { width: 51px; margin-left: 6px; padding: 3px 2px 0 0; border-bottom: 3px solid #76b9ed; }
.w { font: bold 13px "Open Sans", sans-serif; fill: #fff; }
.tray { display: flex; align-items: center; margin-left: auto; color: #fff; font: 14.500px/28px "Open Sans", sans-serif; letter-spacing: -.4px; }
.tray > svg { margin-right: 12px; }
.eng { width: 31px; }
.clock { display: flex; flex-direction: column; align-items: center; width: 70px; margin: -2px 21px 0 15px; line-height: 23px; white-space: nowrap; }
.tray .ac { margin-right: 31px; }
```
